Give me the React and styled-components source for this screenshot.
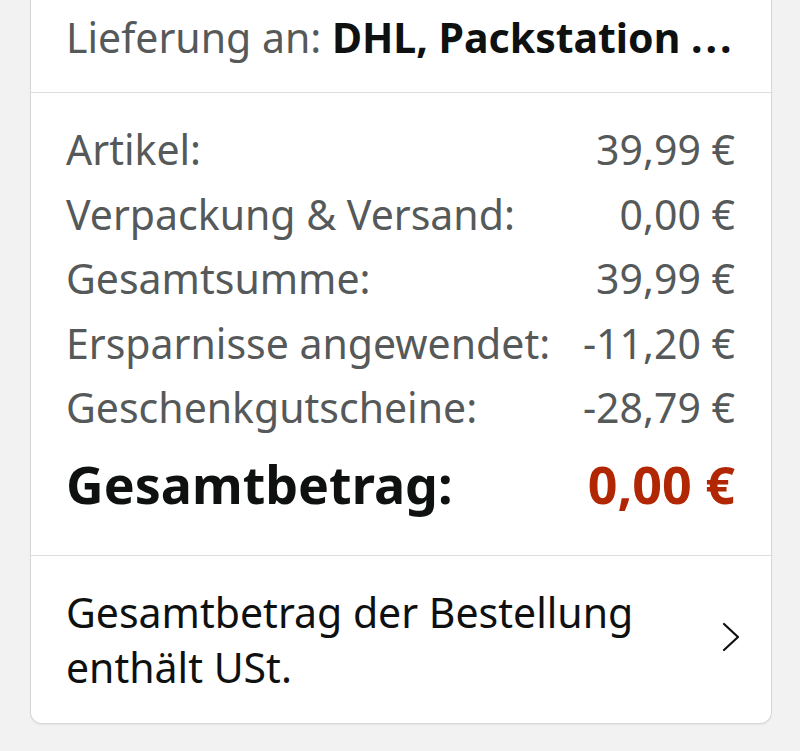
import React from 'react';
import styled, { createGlobalStyle } from 'styled-components';

const GlobalStyle = createGlobalStyle`
  html, body {
    margin: 0;
    padding: 0;
    background: #f2f2f2;
  }
  body {
    font-family: 'Noto Sans', 'Open Sans', sans-serif;
    -webkit-font-smoothing: antialiased;
  }
`;

const Page = styled.div`
  width: 800px;
  height: 751px;
  padding: 0 28px 0 30px;
  box-sizing: border-box;
  overflow: hidden;
`;

const Card = styled.div`
  background: #ffffff;
  border: 1px solid #d5d9d9;
  border-top: none;
  border-radius: 0 0 12px 12px;
  box-shadow: 0 1px 2px rgba(0, 0, 0, 0.06);
`;

const Section = styled.div`
  padding: ${({ $padding }) => $padding};
  & + & {
    border-top: 1.5px solid #dddddd;
  }
`;

const DeliveryLine = styled.div`
  font-size: 41px;
  line-height: 52px;
  color: #565959;
  white-space: nowrap;
`;

const Strong = styled.span`
  font-weight: 700;
  color: #0f1111;
`;

const Dots = styled.span`
  letter-spacing: 3px;
`;

const Row = styled.div`
  display: flex;
  justify-content: space-between;
  align-items: baseline;
  font-size: ${({ $total }) => ($total ? '52px' : '41px')};
  line-height: ${({ $total }) => ($total ? '87px' : '64.5px')};
  font-weight: ${({ $total }) => ($total ? 700 : 400)};
  color: ${({ $total }) => ($total ? '#0f1111' : '#565959')};
`;

const Amount = styled.span`
  color: ${({ $highlight }) => ($highlight ? '#b12704' : 'inherit')};
  white-space: nowrap;
`;

const Footer = styled.div`
  display: flex;
  align-items: center;
  justify-content: space-between;
  gap: 20px;
`;

const FooterText = styled.div`
  font-size: 41px;
  line-height: 55px;
  color: #0f1111;
  max-width: 610px;
`;

const Chevron = styled.svg`
  width: 20px;
  height: 30px;
  flex-shrink: 0;
  margin-top: -6px;
`;

const lines = [
  { label: 'Artikel:', amount: '39,99 €' },
  { label: 'Verpackung & Versand:', amount: '0,00 €' },
  { label: 'Gesamtsumme:', amount: '39,99 €' },
  { label: 'Ersparnisse angewendet:', amount: '-11,20 €' },
  { label: 'Geschenkgutscheine:', amount: '-28,79 €' },
];

const App = () => (
  <>
    <GlobalStyle />
    <Page>
      <Card>
        <Section $padding="11px 36px 29px 35px">
          <DeliveryLine>
            Lieferung an: <Strong>DHL, Packstation <Dots>...</Dots></Strong>
          </DeliveryLine>
        </Section>
        <Section $padding="24px 36px 28px 35px">
          {lines.map((line) => (
            <Row key={line.label}>
              <span>{line.label}</span>
              <Amount>{line.amount}</Amount>
            </Row>
          ))}
          <Row $total>
            <span>Gesamtbetrag:</span>
            <Amount $highlight>0,00 €</Amount>
          </Row>
        </Section>
        <Section $padding="29px 30px 28px 35px">
          <Footer>
            <FooterText>Gesamtbetrag der Bestellung enthält USt.</FooterText>
            <Chevron viewBox="0 0 20 30" fill="none">
              <path d="M3 2 L17 15 L3 28" stroke="#0f1111" strokeWidth="2.2" strokeLinecap="round" strokeLinejoin="round" />
            </Chevron>
          </Footer>
        </Section>
      </Card>
    </Page>
  </>
);

export default App;
